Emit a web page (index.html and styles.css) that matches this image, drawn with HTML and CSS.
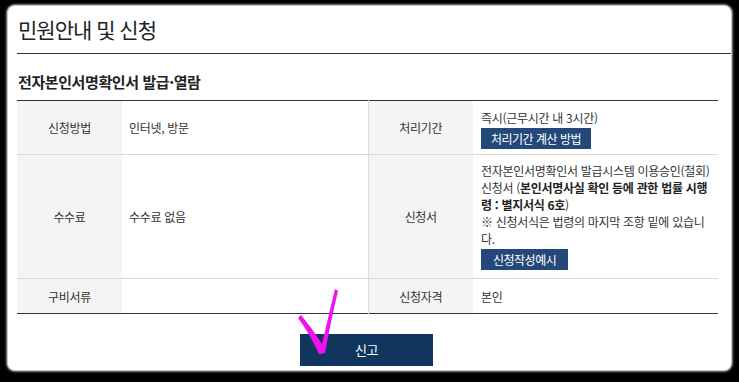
FILE: index.html
```html
<!DOCTYPE html>
<html lang="ko">
<head>
<meta charset="utf-8">
<title>민원안내 및 신청</title>
<link rel="stylesheet" href="styles.css">
</head>
<body>
<div class="panel">
  <h1 class="title">민원안내 및 신청</h1>
  <div class="content">
    <h2 class="subtitle">전자본인서명확인서 발급·열람</h2>
    <table class="info">
      <colgroup>
        <col class="c-th"><col class="c-td1"><col class="c-th"><col class="c-td2">
      </colgroup>
      <tr class="r1">
        <th>신청방법</th>
        <td class="mid">인터넷, 방문</td>
        <th>처리기간</th>
        <td class="rich">즉시(근무시간 내 3시간)<br><span class="btn-sm">처리기간 계산 방법</span></td>
      </tr>
      <tr class="r2">
        <th>수수료</th>
        <td class="mid">수수료 없음</td>
        <th>신청서</th>
        <td class="rich">전자본인서명확인서 발급시스템 이용승인(철회)<br>신청서 (<b>본인서명사실 확인 등에 관한 법률 시행<br>령 : 별지서식 6호</b>)<br>※ 신청서식은 법령의 마지막 조항 밑에 있습니<br>다.<br><span class="btn-sm">신청작성예시</span></td>
      </tr>
      <tr class="r3">
        <th>구비서류</th>
        <td class="mid"></td>
        <th>신청자격</th>
        <td class="plain">본인</td>
      </tr>
    </table>
    <div class="actions">
      <span class="btn-main">신고</span>
    </div>
  </div>
  <svg class="check" width="60" height="80" viewBox="290 280 60 80" aria-hidden="true">
    <path d="M298,318 Q310,334 319,354 L325,353 Q331,320 338,291 L335,289 Q328,318 322,344 Q312,328 301,315 Z" fill="#f010f0"/>
  </svg>
</div>
</body>
</html>
```
FILE: styles.css
```css
html, body {
  margin: 0;
  padding: 0;
  background: #000;
}
body {
  width: 739px;
  height: 382px;
  overflow: hidden;
  font-family: "Noto Sans CJK KR", "Noto Sans", sans-serif;
  color: #333;
}
.panel {
  position: relative;
  margin: 6px 0 0 8px;
  width: 723px;
  height: 364px;
  box-sizing: border-box;
  background: #fff;
  border-radius: 7px;
  box-shadow: 0 0 0 1px #c8c8c8, 0 0 2px 2px #8a8a8a;
  padding-left: 9px;
}
.title {
  margin: 0;
  padding: 8px 0 8px 1px;
  font-size: 21px;
  line-height: 31px;
  font-weight: 400;
  letter-spacing: -1px;
  color: #222;
  border-bottom: 1px solid #333;
}
.content {
  width: 701px;
}
.subtitle {
  margin: 17px 0 7px;
  padding-left: 1px;
  font-size: 15px;
  line-height: 22px;
  font-weight: 700;
  letter-spacing: -0.4px;
  color: #222;
}
.info {
  width: 701px;
  table-layout: fixed;
  border-collapse: collapse;
  border-top: 1px solid #333;
  border-bottom: 1px solid #333;
  font-size: 12px;
  letter-spacing: -0.3px;
  line-height: 17px;
}
.c-th { width: 105px; }
.c-td1 { width: 246px; }
.c-td2 { width: 245px; }
.info tr + tr {
  border-top: 1px solid #d9d9d9;
}
.info th {
  background: #f4f4f4;
  font-weight: 400;
  text-align: center;
  vertical-align: middle;
  color: #333;
  padding: 0;
}
.info td {
  vertical-align: middle;
  padding: 0 8px 0 7px;
}
.info td.mid {
  border-right: 1px solid #dcdcdc;
}
.info td.rich {
  padding: 8px 2px 5px 8px;
  white-space: nowrap;
}
.r2 td.rich {
  padding-top: 7px;
  padding-bottom: 8px;
}
.info td.plain {
  padding-left: 8px;
  height: 34px;
}
.info b {
  font-weight: 700;
  color: #222;
}
.btn-sm {
  display: inline-block;
  margin-top: 2px;
  height: 21px;
  line-height: 21px;
  padding: 0 10px;
  background: #25487a;
  color: #fff;
  font-size: 12px;
  letter-spacing: -0.5px;
  vertical-align: top;
}
.r2 .btn-sm {
  padding: 0 12px;
}
.actions {
  display: flex;
  justify-content: center;
  padding-top: 20px;
  padding-right: 2px;
}
.btn-main {
  display: block;
  width: 133px;
  height: 32px;
  line-height: 32px;
  text-align: center;
  background: #10365f;
  color: #fff;
  font-size: 13px;
  letter-spacing: -0.5px;
}
.check {
  position: absolute;
  left: 282px;
  top: 274px;
  pointer-events: none;
}
```
